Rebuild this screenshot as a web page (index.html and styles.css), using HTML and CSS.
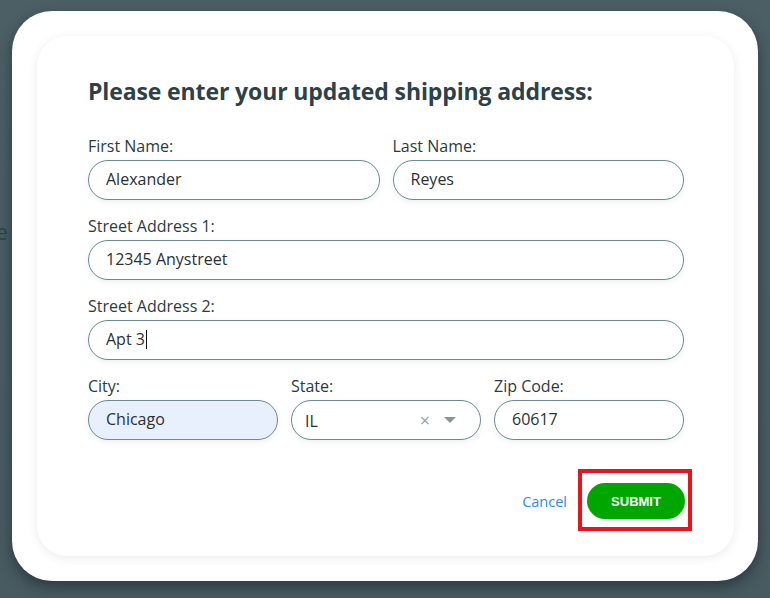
FILE: index.html
```html
<!DOCTYPE html>
<html lang="en">
<head>
<meta charset="utf-8">
<title>Update shipping address</title>
<link rel="stylesheet" href="styles.css">
</head>
<body>
<div class="page">
  <p class="page-text">e</p>
</div>
<div class="modal">
  <div class="card">
    <h1 class="title">Please enter your updated shipping address:</h1>
    <form class="form">
      <div class="row">
        <label class="field">
          <span class="label">First Name:</span>
          <span class="input">Alexander</span>
        </label>
        <label class="field">
          <span class="label">Last Name:</span>
          <span class="input">Reyes</span>
        </label>
      </div>
      <div class="row">
        <label class="field">
          <span class="label">Street Address 1:</span>
          <span class="input">12345 Anystreet</span>
        </label>
      </div>
      <div class="row">
        <label class="field">
          <span class="label">Street Address 2:</span>
          <span class="input">Apt 3<span class="caret"></span></span>
        </label>
      </div>
      <div class="row">
        <label class="field">
          <span class="label">City:</span>
          <span class="input autofill">Chicago</span>
        </label>
        <label class="field">
          <span class="label">State:</span>
          <span class="input select">
            <span class="select-value">IL</span>
            <span class="clear">×</span>
            <svg class="arrow" width="12" height="6" viewBox="0 0 12 6"><path d="M0 0h12L6 6z" fill="#8c9699"/></svg>
          </span>
        </label>
        <label class="field">
          <span class="label">Zip Code:</span>
          <span class="input">60617</span>
        </label>
      </div>
      <div class="actions">
        <a class="cancel">Cancel</a>
        <span class="submit-wrap"><button type="button" class="submit">SUBMIT</button></span>
      </div>
    </form>
  </div>
</div>
</body>
</html>
```

FILE: styles.css
```css
* { box-sizing: border-box; }
html, body { margin: 0; height: 100%; }
body {
  background: linear-gradient(180deg, #4b5f65 0%, #485b61 100%);
  font-family: "Open Sans", Lato, sans-serif;
  overflow: hidden;
}
.page { padding-top: 218px; }
.page-text {
  margin: 0 0 0 -4px;
  font-size: 21px;
  color: #2f4247;
}
.modal {
  position: absolute;
  left: 12px;
  top: 11px;
  width: 746px;
  height: 570px;
  background: #fff;
  border-radius: 40px;
  padding: 25px 24px 25px 25px;
  display: flex;
  box-shadow: 0 6px 14px rgba(20, 30, 32, 0.55);
}
.card {
  flex: 1;
  border-radius: 30px;
  background: #fff;
  box-shadow: 0 2px 10px rgba(40, 60, 70, 0.10);
  padding: 41px 50px 0 51px;
}
.title {
  margin: 0 0 31px;
  font-size: 23px;
  line-height: 28px;
  font-weight: 700;
  color: #2d4146;
  letter-spacing: -0.12px;
}
.form { display: flex; flex-direction: column; gap: 16px; }
.row { display: flex; gap: 13px; }
.field { flex: 1; display: flex; flex-direction: column; min-width: 0; }
.label {
  font-size: 16px;
  line-height: 20px;
  color: #2b3b3f;
  margin-bottom: 4px;
}
.input {
  height: 40px;
  border: 1px solid #6d8a90;
  border-radius: 20px;
  padding: 0 17px 2px;
  display: flex;
  align-items: center;
  font-size: 16px;
  color: #2a3134;
  background: #fff;
  box-shadow: 0 2px 6px rgba(40, 60, 70, 0.08);
}
.autofill { background: #e8f0fe; }
.caret {
  display: inline-block;
  width: 1px;
  height: 19px;
  background: #111;
  margin-left: 1px;
}
.select { padding: 0 12px 0 13px; }
.select-value { flex: 1; padding-top: 2px; }
.clear { color: #9aa2a5; font-size: 18px; margin-right: 14px; line-height: 1; }
.arrow { margin-right: 12px; }
.actions {
  display: flex;
  justify-content: flex-end;
  align-items: center;
  gap: 20px;
  margin-top: 27px;
}
.cancel {
  font-size: 14.5px;
  color: #2b8cf2;
  cursor: pointer;
}
.submit-wrap { position: relative; margin-right: -1px; display: flex; }
.submit-wrap::after {
  content: "";
  position: absolute;
  top: -14px;
  bottom: -12px;
  left: -9px;
  right: -7px;
  border: 4px solid #e8141c;
}
.submit {
  width: 98px;
  height: 36px;
  border: none;
  border-radius: 18px;
  background: #00a600;
  color: #fff;
  font-family: "Liberation Sans", Arial, sans-serif;
  font-weight: 700;
  font-size: 13px;
  padding: 0;
}
```
